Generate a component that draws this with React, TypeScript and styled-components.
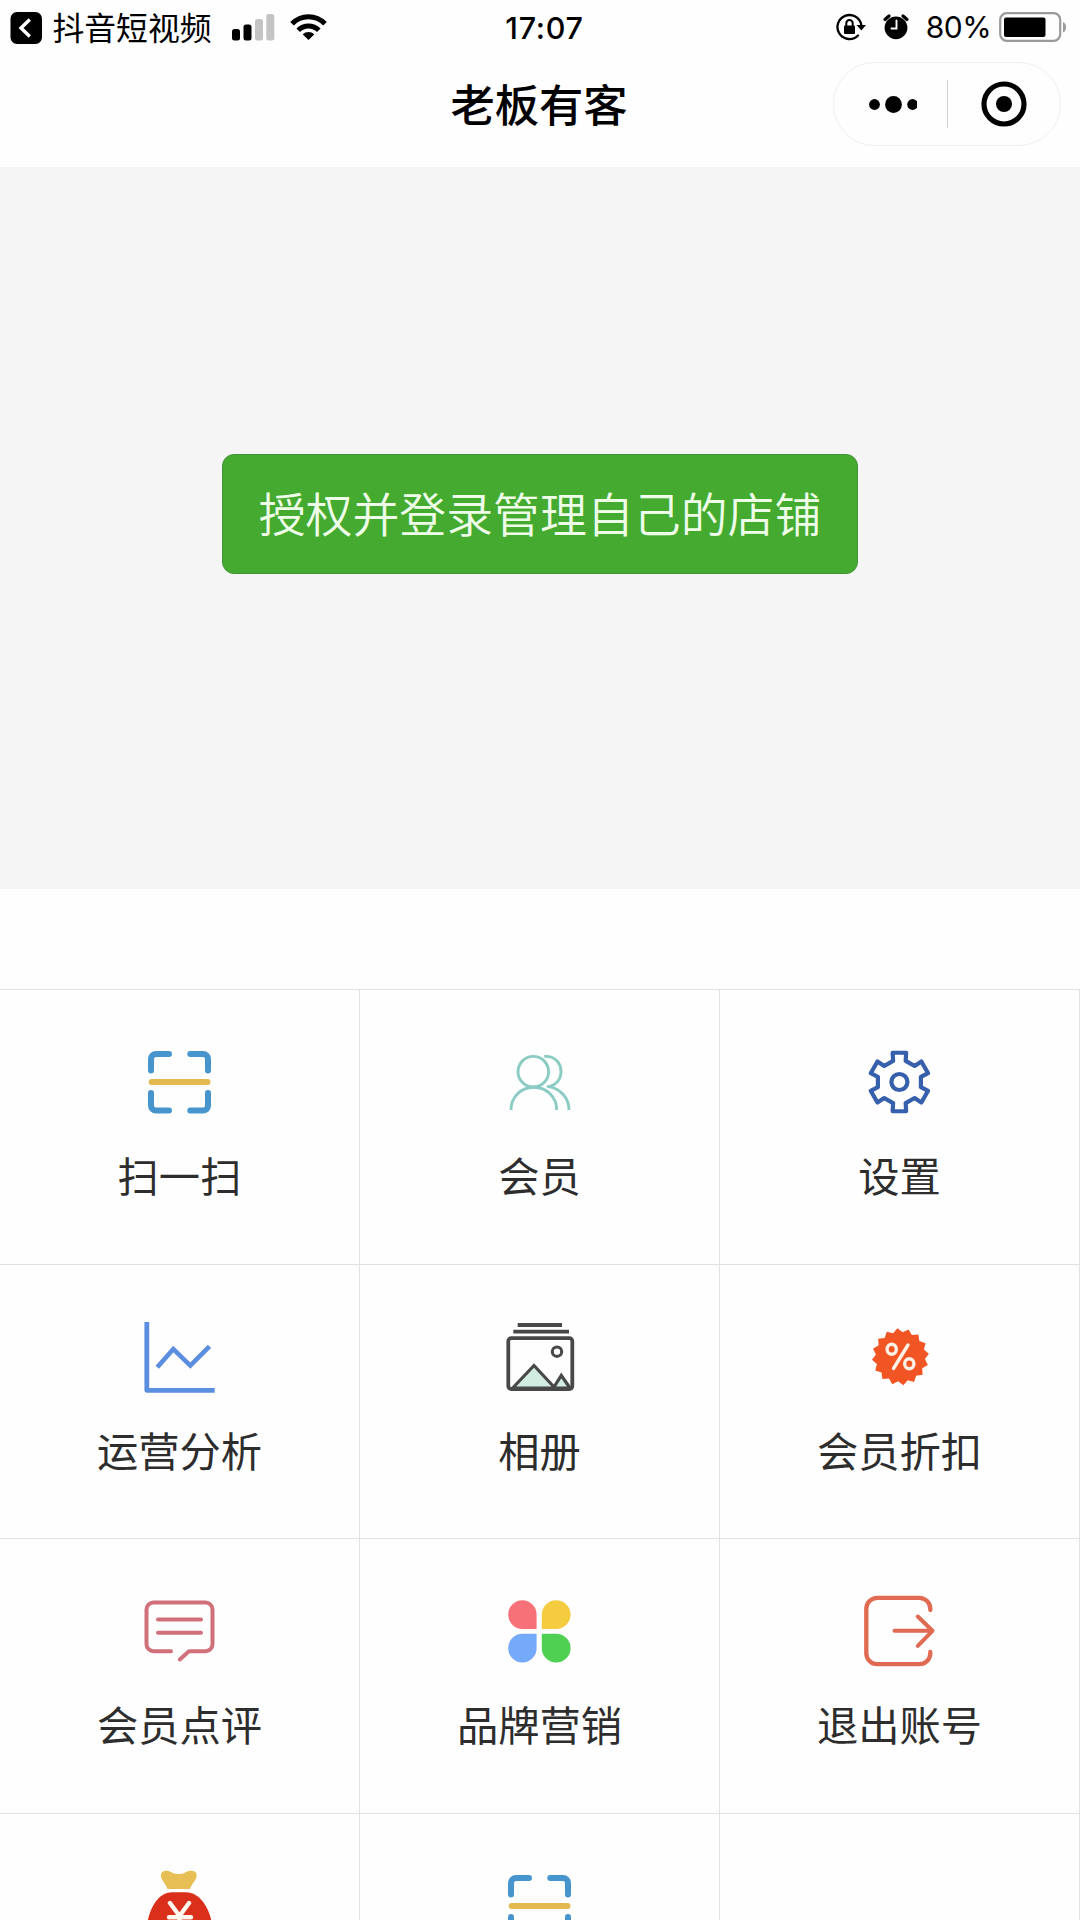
import React from "react";
import styled, { createGlobalStyle } from "styled-components";

const GlobalStyle = createGlobalStyle`
  * { box-sizing: border-box; }
  body {
    margin: 0;
    background: #fff;
    font-family: "Noto Sans CJK SC", sans-serif;
  }
`;

const Screen = styled.main`
  width: 1080px;
  height: 1920px;
  overflow: hidden;
  background: #fefefe;
  display: flex;
  flex-direction: column;
`;

const StatusBar = styled.div`
  display: grid;
  grid-template-columns: 1fr auto 1fr;
  align-items: center;
  height: 55px;
  flex: none;
  padding: 0 13px 0 10px;
  color: #000;
`;

const StatusGroup = styled.div<{ $end?: boolean }>`
  display: flex;
  align-items: center;
  justify-content: ${(p) => (p.$end ? "flex-end" : "flex-start")};
`;

const BackApp = styled.span`
  margin: 0 20.5px 0 9.5px;
  padding-bottom: 4px;
  font-size: 31.8px;
  line-height: 50px;
`;

const Clock = styled.time`
  margin-left: 12px;
  padding-bottom: 1px;
  font-family: Inter, sans-serif;
  font-size: 30.5px;
  font-weight: 550;
  letter-spacing: 0.7px;
`;

const BatteryText = styled.span`
  margin: 0 8px 0 17px;
  padding-bottom: 1px;
  font-family: Inter, sans-serif;
  font-size: 30px;
  letter-spacing: -0.6px;
`;

const NavBar = styled.header`
  display: grid;
  grid-template-columns: 1fr auto 1fr;
  align-items: center;
  height: 112px;
  flex: none;
  padding: 0 19px 14px;
`;

const Title = styled.h1`
  grid-column: 2;
  margin: 0 2px 2px 0;
  font-size: 44.3px;
  line-height: 60px;
  font-weight: 500;
  color: #000;
`;

const Capsule = styled.div`
  justify-self: end;
  display: flex;
  align-items: center;
  width: 228px;
  height: 84px;
  border: 1.5px solid #f0f0f0;
  border-radius: 42px;
`;

const CapsuleButton = styled.button<{ $width: number }>`
  display: flex;
  justify-content: center;
  width: ${(p) => p.$width}px;
  padding: 0;
  border: 0;
  background: none;
`;

const CapsuleDivider = styled.span`
  width: 1px;
  height: 48px;
  background: #d4d4d4;
`;

const Hero = styled.section`
  display: flex;
  align-items: center;
  justify-content: center;
  height: 722px;
  flex: none;
  padding-bottom: 28px;
  background: #f5f5f5;
`;

const LoginButton = styled.button`
  width: 636px;
  height: 120px;
  padding: 0 0 4px;
  border: 1.5px solid #3f9438;
  border-radius: 12px;
  background: #45aa30;
  color: #eefde8;
  font-family: inherit;
  font-size: 46.9px;
  font-weight: 350;
  white-space: nowrap;
`;

const Menu = styled.nav`
  display: grid;
  grid-template-columns: repeat(3, 360px);
  grid-auto-rows: 274.67px;
  flex: none;
  margin-top: 100px;
`;

const Tile = styled.div`
  display: flex;
  flex-direction: column;
  align-items: center;
  padding-top: 52px;
  border-top: 1px solid #e2e2e2;
  border-right: 1px solid #e2e2e2;
`;

const TileLabel = styled.span`
  margin-top: 24px;
  font-size: 41.3px;
  line-height: 56px;
  color: #2d2d2d;
`;

const Glyph = styled.svg`
  display: block;
  flex: none;
  fill: none;
  stroke-linecap: round;
  stroke-linejoin: round;
`;

const Icon = ({ children }: { children?: React.ReactNode }) => (
  <Glyph width="80" height="80" viewBox="0 0 80 80">
    {children}
  </Glyph>
);

const ScanIcon = () => (
  <Icon>
    <path
      stroke="#4695cd"
      strokeWidth="6"
      d="M11 28.500V17a5 5 0 0 1 5-5H29M50.300 12H63a5 5 0 0 1 5 5v11.500M11 51v12.500a5 5 0 0 0 5 5H29M50.300 68.500H63a5 5 0 0 0 5-5V51"
    />
    <path stroke="#e3b951" strokeWidth="5.800" d="M11.600 40H67.600" />
  </Icon>
);

const MembersIcon = () => (
  <Icon>
    <g stroke="#8accc3" strokeWidth="2.900" strokeLinecap="butt">
      <circle cx="33.300" cy="29.700" r="15.300" />
      <path d="M11 68C11 55 21 45.300 33.800 45.300S56.700 55 56.700 68" />
      <path d="M44.300 14.500C54 13.500 61 20.500 61 29.500C61 37.500 56 43.500 48 44.600C60 46 69 56 69 68" />
    </g>
  </Icon>
);

const gearPoints = Array.from({ length: 6 }, (_, i) =>
  [
    [22.1, -16.5],
    [30, -13],
    [30, 13],
    [22.1, 16.5],
  ].map(([r, offset]) => {
    const a = ((i * 60 + offset) * Math.PI) / 180;
    return `${(39.4 + r * Math.sin(a)).toFixed(2)},${(40 - r * Math.cos(a)).toFixed(2)}`;
  })
)
  .flat()
  .join(" ");

const SettingsIcon = () => (
  <Icon>
    <g stroke="#365fac" strokeWidth="4.200">
      <polygon points={gearPoints} />
      <circle cx="39.400" cy="40" r="8" />
    </g>
  </Icon>
);

const AnalysisIcon = () => (
  <Icon>
    <g stroke="#5b8edf" strokeLinecap="butt">
      <path strokeWidth="4.800" d="M6.800 5V73.300H74.700" />
      <path strokeWidth="4.600" strokeLinejoin="miter" d="M17.300 50.300L33.300 32L50.300 48.600L69.500 29.300" />
    </g>
  </Icon>
);

const AlbumIcon = () => (
  <Icon>
    <g stroke="#484848" strokeWidth="3.800" strokeLinecap="butt">
      <path d="M17.700 8H62M13.300 14.700H69" />
      <path fill="#d2ece1" strokeLinejoin="miter" strokeWidth="3.200" d="M12.700 71L34 48.500L54 70L61.300 58.500L70 71Z" />
      <rect x="8.300" y="21.200" width="64" height="50.800" rx="3" />
      <circle cx="57" cy="34.700" r="4.700" strokeWidth="3.100" />
    </g>
  </Icon>
);

const badgePoints = Array.from({ length: 32 }, (_, i) => {
  const r = i % 2 ? 24.6 : 28.6;
  const a = ((i * 11.25 - 6) * Math.PI) / 180;
  return `${(40.4 + r * Math.sin(a)).toFixed(2)},${(39.8 - r * Math.cos(a)).toFixed(2)}`;
}).join(" ");

const DiscountIcon = () => (
  <Icon>
    <polygon points={badgePoints} fill="#f15524" />
    <g stroke="#fff0e4" strokeWidth="3.400">
      <ellipse cx="31.700" cy="32.300" rx="4.600" ry="5" />
      <ellipse cx="49.300" cy="46.800" rx="4.600" ry="5" />
      <path d="M48 28L33.500 51.500" />
    </g>
  </Icon>
);

const ReviewIcon = () => (
  <Icon>
    <g stroke="#cf707a" strokeWidth="4">
      <path d="M31 60.200H13.500a7 7 0 0 1-7-7V18.500a7 7 0 0 1 7-7H65.500a7 7 0 0 1 7 7V53.200a7 7 0 0 1-7 7H49L39.800 68.500" />
      <path d="M18 28.500H61M18 41.800H61" />
    </g>
  </Icon>
);

const BrandIcon = () => (
  <Icon>
    <path fill="#f77179" d="M36.600 38H22.700a14.200 14.400 0 1 1 13.900-14.300Z" />
    <path fill="#f5cc40" d="M41.800 38V23.700a14.400 14.400 0 1 1 14.400 14.300Z" />
    <path fill="#75a9fa" d="M36.600 42.700V57a14.200 14.400 0 1 1-13.900-14.300Z" />
    <path fill="#50d052" d="M41.800 42.700H56.200a14.400 14.400 0 1 1-14.400 14.300Z" />
  </Icon>
);

const LogoutIcon = () => (
  <Icon>
    <g stroke="#e16a53">
      <path strokeWidth="4.300" d="M70.300 19V17.800a11 11 0 0 0-11-11H17.300a11 11 0 0 0-11 11V62.200a11 11 0 0 0 11 11H59.300a11 11 0 0 0 11-11V61" />
      <path strokeWidth="4" d="M34.500 39.800H72.500M57.800 25.500L72.500 39.800L57.800 54.800" />
    </g>
  </Icon>
);

const MoneyBagIcon = () => (
  <Icon>
    <path
      fill="#e7bf55"
      d="M27.500 23C25.500 17 20.500 14 20.900 8.500C21.500 4 27 3.900 31 6C35 8.800 42 8.800 46 6C50 3.900 56 4 56.700 8.500C57 14 52 17 50 23Z"
    />
    <path
      fill="#da301b"
      d="M32 26.300H46C60 26.300 68.500 42 71.200 54C73.500 69 68 78 56 78H23C11 78 5.500 69 7.900 54C10.500 42 18 26.300 32 26.300Z"
    />
    <path stroke="#fff8ef" strokeWidth="4.400" d="M30 37L39.500 50L49 37M29 51.300H51M29 60H51M39.500 50V69" />
  </Icon>
);

const tiles: { label: string; icon: React.ComponentType }[] = [
  { label: "扫一扫", icon: ScanIcon },
  { label: "会员", icon: MembersIcon },
  { label: "设置", icon: SettingsIcon },
  { label: "运营分析", icon: AnalysisIcon },
  { label: "相册", icon: AlbumIcon },
  { label: "会员折扣", icon: DiscountIcon },
  { label: "会员点评", icon: ReviewIcon },
  { label: "品牌营销", icon: BrandIcon },
  { label: "退出账号", icon: LogoutIcon },
  { label: "", icon: MoneyBagIcon },
  { label: "", icon: ScanIcon },
  { label: "", icon: Icon },
];

const BackIcon = () => (
  <Glyph width="33" height="34" viewBox="0 0 33 34">
    <rect x="0.500" y="1" width="31.500" height="32" rx="6.500" fill="#000" />
    <path d="M19.800 8.500L11 17L19.800 25.500" stroke="#fff" strokeWidth="3.400" strokeLinecap="butt" strokeLinejoin="miter" />
  </Glyph>
);

const SignalIcon = () => (
  <Glyph width="43" height="28" viewBox="0 0 43 28">
    <rect x="0" y="15" width="8" height="11.500" rx="2.500" fill="#000" />
    <rect x="11.500" y="10.500" width="8" height="16" rx="2.500" fill="#000" />
    <rect x="23" y="5" width="8" height="21.500" rx="2.500" fill="#c4c4c4" />
    <rect x="34.300" y="0" width="8" height="26.500" rx="2.500" fill="#c4c4c4" />
  </Glyph>
);

const WifiGlyph = styled(Glyph)`
  margin-left: 14.5px;
`;

const WifiIcon = () => (
  <WifiGlyph width="37" height="30" viewBox="0 0 37 30">
    <g stroke="#000" strokeWidth="5" strokeLinecap="butt">
      <path d="M2 10.800C11 1.300 26 1.300 35 10.800" />
      <path d="M8.200 17.300C14 11.500 23 11.500 28.800 17.300" />
    </g>
    <path fill="#000" d="M18.500 27L12.800 21.500C16 18.300 21 18.300 24.200 21.500Z" />
  </WifiGlyph>
);

const RotationLockIcon = () => (
  <Glyph width="30" height="30" viewBox="0 0 30 30">
    <path d="M22 22.500A12 12 0 1 1 25.300 12" stroke="#000" strokeWidth="2.300" />
    <path d="M20.500 12H30L25.300 17.500Z" fill="#000" />
    <rect x="8" y="12.500" width="11" height="8.500" rx="1" fill="#000" />
    <path d="M10.300 13V10.300a3.200 3.200 0 0 1 6.400 0V13" stroke="#000" strokeWidth="2" />
  </Glyph>
);

const AlarmGlyph = styled(Glyph)`
  margin-left: 17px;
`;

const AlarmIcon = () => (
  <AlarmGlyph width="26" height="28" viewBox="0 0 26 28">
    <circle cx="13" cy="13.800" r="11.400" fill="#000" />
    <path d="M2 5.500L6 2M24 5.500L20 2" stroke="#000" strokeWidth="3.200" />
    <path d="M13.500 6.500V14.500H8.500" stroke="#fff" strokeWidth="1.900" strokeLinejoin="miter" />
  </AlarmGlyph>
);

const BatteryIcon = () => (
  <Glyph width="68" height="34" viewBox="0 0 68 34">
    <rect x="1.200" y="2.200" width="60" height="27.600" rx="6.500" stroke="#9a9a9a" strokeWidth="2.200" />
    <rect x="5" y="6.500" width="41.500" height="19.500" rx="2" fill="#000" />
    <path d="M64 11C68 12.500 68 20 64 21.500Z" fill="#9a9a9a" />
  </Glyph>
);

export default function App() {
  return (
    <Screen>
      <GlobalStyle />
      <StatusBar>
        <StatusGroup>
          <BackIcon />
          <BackApp>抖音短视频</BackApp>
          <SignalIcon />
          <WifiIcon />
        </StatusGroup>
        <Clock>17:07</Clock>
        <StatusGroup $end>
          <RotationLockIcon />
          <AlarmIcon />
          <BatteryText>80%</BatteryText>
          <BatteryIcon />
        </StatusGroup>
      </StatusBar>
      <NavBar>
        <Title>老板有客</Title>
        <Capsule>
          <CapsuleButton $width={113} aria-label="更多">
            <Glyph width="52" height="20" viewBox="0 0 52 20">
              <g fill="#000">
                <circle cx="9.500" cy="10.500" r="5.400" />
                <circle cx="28.500" cy="10.500" r="8.400" />
                <circle cx="47.600" cy="10.500" r="5.400" />
              </g>
            </Glyph>
          </CapsuleButton>
          <CapsuleDivider />
          <CapsuleButton $width={112} aria-label="关闭">
            <Glyph width="46" height="46" viewBox="0 0 46 46">
              <circle cx="23" cy="23" r="20" stroke="#000" strokeWidth="5.200" />
              <circle cx="23" cy="23" r="8" fill="#000" />
            </Glyph>
          </CapsuleButton>
        </Capsule>
      </NavBar>
      <Hero>
        <LoginButton>授权并登录管理自己的店铺</LoginButton>
      </Hero>
      <Menu>
        {tiles.map(({ label, icon: TileIcon }, i) => (
          <Tile key={i}>
            <TileIcon />
            {label && <TileLabel>{label}</TileLabel>}
          </Tile>
        ))}
      </Menu>
    </Screen>
  );
}
